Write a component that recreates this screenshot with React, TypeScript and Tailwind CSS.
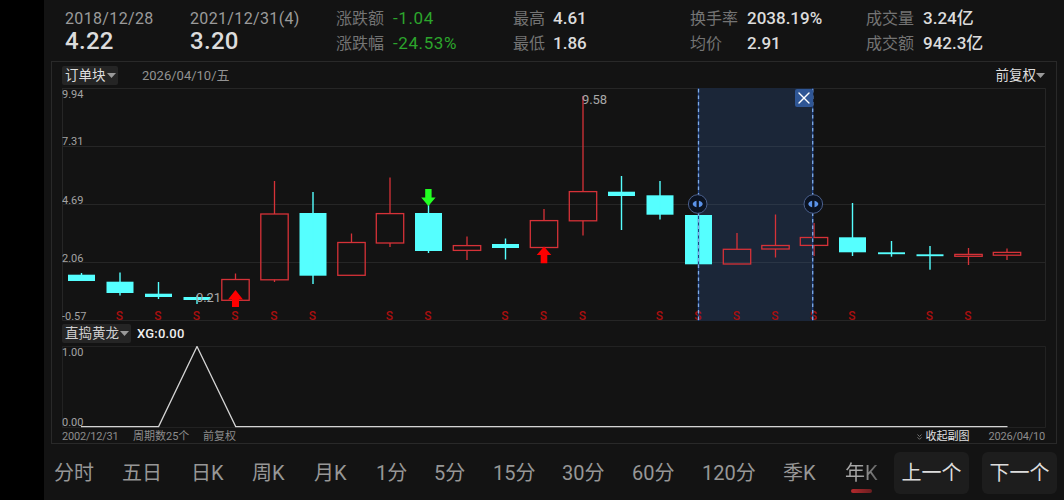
import { useState } from "react";
import { X } from "lucide-react";

type Candle = {
  up: boolean;
  top: number;
  bottom: number;
  high: number;
  low: number;
  signal?: boolean;
};

const FIRST_X = 81.5;
const STEP = 38.56;
const candleX = (i: number) => Math.round((FIRST_X + i * STEP) * 2) / 2;

const candles: Candle[] = [
  { up: false, top: 274.7, bottom: 281, high: 273, low: 281 },
  { up: false, top: 281.7, bottom: 293, high: 272.5, low: 295.5, signal: true },
  { up: false, top: 293.7, bottom: 297, high: 282, low: 299, signal: true },
  { up: false, top: 297, bottom: 300, high: 295.5, low: 304, signal: true },
  { up: true, top: 279.5, bottom: 300.3, high: 273.5, low: 300, signal: true },
  { up: true, top: 214, bottom: 279.8, high: 181, low: 282, signal: true },
  { up: false, top: 213, bottom: 275.7, high: 192, low: 284, signal: true },
  { up: true, top: 242.5, bottom: 275.3, high: 233.5, low: 275 },
  { up: true, top: 213.6, bottom: 243, high: 177.5, low: 247, signal: true },
  { up: false, top: 213, bottom: 251, high: 204, low: 253, signal: true },
  { up: true, top: 245.6, bottom: 250.4, high: 236.5, low: 260 },
  { up: false, top: 244, bottom: 248, high: 238.5, low: 259.5, signal: true },
  { up: true, top: 220.6, bottom: 247.5, high: 209, low: 247, signal: true },
  { up: true, top: 191.6, bottom: 220.8, high: 96, low: 235.5, signal: true },
  { up: false, top: 191.7, bottom: 196, high: 176, low: 230 },
  { up: false, top: 195.3, bottom: 214.7, high: 181, low: 219.5, signal: true },
  { up: false, top: 215, bottom: 264.3, high: 215, low: 264, signal: true },
  { up: true, top: 249.3, bottom: 264, high: 233, low: 264, signal: true },
  { up: true, top: 245.5, bottom: 249, high: 214.5, low: 257.5, signal: true },
  { up: true, top: 237.5, bottom: 245.4, high: 223, low: 256, signal: true },
  { up: false, top: 237.3, bottom: 252.3, high: 203, low: 256, signal: true },
  { up: false, top: 252.3, bottom: 254.2, high: 241, low: 256.7 },
  { up: false, top: 254.3, bottom: 256.2, high: 246, low: 269.7, signal: true },
  { up: true, top: 254.4, bottom: 256.3, high: 248, low: 265, signal: true },
  { up: true, top: 252.4, bottom: 255.2, high: 248.5, low: 260 },
];

const axis = [
  { label: "9.94", y: 98 },
  { label: "7.31", y: 145.3 },
  { label: "4.69", y: 203.5 },
  { label: "2.06", y: 261.7 },
  { label: "-0.57", y: 319.8 },
];

const stats = [
  {
    width: "w-[177px]",
    rows: [
      { label: "涨跌额", value: "-1.04" },
      { label: "涨跌幅", value: "-24.53%" },
    ],
    down: true,
  },
  {
    width: "w-[177px]",
    rows: [
      { label: "最高", value: "4.61" },
      { label: "最低", value: "1.86" },
    ],
  },
  {
    width: "w-[176px]",
    rows: [
      { label: "换手率", value: "2038.19%" },
      { label: "均价", value: "2.91" },
    ],
    wide: true,
  },
  {
    width: "w-[150px]",
    rows: [
      { label: "成交量", value: "3.24亿" },
      { label: "成交额", value: "942.3亿" },
    ],
    wide: true,
  },
];

const periods = [
  { name: "分时", width: "w-[68px]" },
  { name: "五日", width: "w-[69px]" },
  { name: "日K", width: "w-[61px]" },
  { name: "周K", width: "w-[62px]" },
  { name: "月K", width: "w-[62px]" },
  { name: "1分", width: "w-[58px]" },
  { name: "5分", width: "w-[59px]" },
  { name: "15分", width: "w-[69px]" },
  { name: "30分", width: "w-[70px]" },
  { name: "60分", width: "w-[70px]" },
  { name: "120分", width: "w-[81px]" },
  { name: "季K", width: "w-[62px]" },
  { name: "年K", width: "w-[49px]" },
];

const Caret = () => (
  <svg className="h-[5px] w-[9px] shrink-0" viewBox="0 0 9 5">
    <path d="M0 0H9L4.5 5Z" fill="#9a9a9a" />
  </svg>
);

const Handle = ({ x }: { x: number }) => (
  <g>
    <circle cx={x} cy={204} r={9.3} fill="#0b1322" stroke="#4a5f8c" />
    <path
      d={`M${x - 1.2} 200.8V207.2C${x - 3.2} 207 ${x - 5} 205.2 ${x - 5} 204S${x - 3.2} 201 ${x - 1.2} 200.8Z`}
      fill="#5b93ea"
    />
    <path
      d={`M${x + 1.2} 200.8V207.2C${x + 3.2} 207 ${x + 5} 205.2 ${x + 5} 204S${x + 3.2} 201 ${x + 1.2} 200.8Z`}
      fill="#5b93ea"
    />
  </g>
);

const Header = () => (
  <header className="flex h-[61px] pl-[21px] pt-[6px] text-[17px] leading-[25px]">
    <div className="w-[125px]">
      <p className="text-base leading-[25px] tracking-[0.35px] text-[#9b9b9b]">
        2018/12/28
      </p>
      <p className="-mt-0.5 text-2xl leading-[25px] font-medium tracking-[0.3px] text-[#dcdcdc]">
        4.22
      </p>
    </div>
    <div className="w-[146px]">
      <p className="text-base leading-[25px] tracking-[0.35px] text-[#9b9b9b]">
        2021/12/31(4)
      </p>
      <p className="-mt-0.5 text-2xl leading-[25px] font-medium tracking-[0.3px] text-[#dcdcdc]">
        3.20
      </p>
    </div>
    {stats.map((group, i) => (
      <div key={i} className={group.width}>
        {group.rows.map((row) => (
          <p key={row.label} className="flex whitespace-nowrap">
            <span
              className={`text-base leading-[25px] text-[#747474] ${
                group.wide || group.down ? "w-[57px]" : "w-10"
              }`}
            >
              {row.label}
            </span>
            <span
              className={
                group.down
                  ? "tracking-[0.6px] text-[#2ca52c]"
                  : "font-medium text-[#dcdcdc]"
              }
            >
              {row.value}
            </span>
          </p>
        ))}
      </div>
    ))}
  </header>
);

const MainChart = ({
  selecting,
  onClose,
}: {
  selecting: boolean;
  onClose: () => void;
}) => (
  <div className="relative h-[234px]">
    <svg className="block h-[234px] w-[984px]" viewBox="62 88 984 234">
      <path
        d="M62 88.5H1045.5V320.5H62.5V88.5M62 146.5H1045M62 204.5H1045M62 262.5H1045"
        fill="none"
        stroke="#262626"
      />
      {selecting && (
        <rect x={698} y={88} width={115} height={233} fill="#1b2638" />
      )}
      {selecting && (
        <path
          d="M698 146.5H813M698 204.5H813M698 262.5H813"
          stroke="#2a3545"
        />
      )}
      <g fontSize={11} fill="#a3a3a3">
        {axis.map((tick) => (
          <text key={tick.label} x={62} y={tick.y}>
            {tick.label}
          </text>
        ))}
      </g>
      {candles.map((c, i) => {
        const x = candleX(i);
        return c.up ? (
          <g key={i} stroke="#d63238" strokeWidth={1.3} fill="none">
            <rect x={x - 13.7} y={c.top} width={27.4} height={c.bottom - c.top} />
            <path d={`M${x} ${c.high}V${c.top}M${x} ${c.bottom}V${c.low}`} />
          </g>
        ) : (
          <g key={i} fill="#55ffff">
            <rect x={x - 13.5} y={c.top} width={27} height={c.bottom - c.top} />
            <rect x={x - 0.7} y={c.high} width={1.4} height={c.low - c.high} />
          </g>
        );
      })}
      <g fontSize={12} fontWeight={500} fill="#a80f0f" textAnchor="middle">
        {candles.map(
          (c, i) =>
            c.signal && (
              <text key={i} x={candleX(i) - 0.7} y={319.7}>
                S
              </text>
            )
        )}
      </g>
      <g fontSize={13} fill="#a8a8a8">
        <text x={196} y={302} textLength={25}>
          0.21
        </text>
        <text x={582} y={104} textLength={25}>
          9.58
        </text>
      </g>
      <path d="M235.5 290L243 299.5H239V307H232V299.5H228Z" fill="#ff0000" />
      <path d="M544 246.5L551.3 255H547.3V263.3H540.7V255H536.7Z" fill="#ff0000" />
      <path d="M425.2 189H431.6V197.5H435.6L428.4 206L421.2 197.5H425.2Z" fill="#22ff22" />
      {selecting && (
        <g>
          <path
            d="M698.5 88V321M812.7 88V321"
            stroke="#1f4080"
            strokeWidth={1.3}
          />
          <path
            d="M698.5 89V321M812.7 89V321"
            stroke="#7fabe8"
            strokeWidth={1.3}
            strokeDasharray="3.6 2.9"
          />
          <Handle x={697.7} />
          <Handle x={813.3} />
        </g>
      )}
    </svg>
    {selecting && (
      <button
        className="absolute top-px left-[733px] flex h-[18px] w-[18px] items-center justify-center rounded-[2px] bg-[#2f5695] text-white"
        onClick={onClose}
      >
        <X size={20} strokeWidth={1.6} className="shrink-0" />
      </button>
    )}
  </div>
);

const SubChart = () => (
  <svg className="block h-[82px] w-[984px]" viewBox="62 346 984 82">
    <path d="M62.5 346.5H1045.5V427.5H62.5Z" fill="none" stroke="#222222" />
    <g fontSize={11} fill="#a3a3a3">
      <text x={62} y={356}>
        1.00
      </text>
      <text x={62} y={426}>
        0.00
      </text>
    </g>
    <path
      d="M81 426.6H158.6L197 346.5L235.7 426.6H1007.5"
      fill="none"
      stroke="#d4d4d4"
      strokeWidth={1.3}
    />
  </svg>
);

const App = () => {
  const [period, setPeriod] = useState<string>("年K");
  const [selecting, setSelecting] = useState<boolean>(true);

  return (
    <div className="h-[500px] w-[1064px] overflow-hidden bg-black pl-11 font-['Roboto','Noto_Sans_CJK_SC',sans-serif]">
      <div className="h-full bg-[#131313]">
        <Header />
        <section className="ml-[7px] h-[383px] w-[1006px] border border-[#292929] pl-2.5">
          <div className="flex h-[26px] w-[983px] items-center text-[13.5px]">
            <button className="flex h-[19px] w-14 items-center gap-px rounded-[2px] bg-[#252525] pl-[3px] whitespace-nowrap text-[#dedede]">
              订单块
              <Caret />
            </button>
            <span className="ml-6 pt-0.5 text-[13px] text-[#929292]">
              2026/04/10/五
            </span>
            <button className="ml-auto flex items-center text-[#dedede]">
              前复权
              <Caret />
            </button>
          </div>
          <MainChart
            selecting={selecting}
            onClose={() => setSelecting(false)}
          />
          <div className="flex h-6 items-center pb-px text-[13.5px]">
            <button className="flex h-[19px] w-[69px] items-center gap-px rounded-[2px] bg-[#252525] pl-[3px] whitespace-nowrap text-[#cfcfcf]">
              直捣黄龙
              <Caret />
            </button>
            <span className="ml-1.5 text-[13px] font-medium tracking-[0.2px] text-[#eeeeee]">
              XG:0.00
            </span>
          </div>
          <SubChart />
          <div className="flex h-[15px] w-[983px] items-center pt-[3px] text-[11px] whitespace-nowrap text-[#8c8c8c]">
            <span className="w-[71px] tracking-[-0.2px]">2002/12/31</span>
            <span className="w-[70px]">周期数25个</span>
            <span>前复权</span>
            <button className="ml-auto flex items-center gap-[3px] text-[#e0e0e0]">
              <svg className="h-1.5 w-[5px]" viewBox="0 0 5 6">
                <path
                  d="M0.5 0.5L2.5 2.5L4.5 0.5M0.5 3.3L2.5 5.3L4.5 3.3"
                  fill="none"
                  stroke="#8a8a8a"
                  strokeWidth={0.8}
                />
              </svg>
              收起副图
            </button>
            <span className="ml-[19px] tracking-[-0.2px]">2026/04/10</span>
          </div>
        </section>
        <nav className="flex h-14 items-center pt-px pl-2.5 text-xl whitespace-nowrap text-[#979797]">
          {periods.map((p) => (
            <button
              key={p.name}
              className={`relative h-10 shrink-0 text-left ${p.width} ${
                p.name === period && p.name === "年K"
                  ? "bg-linear-to-r from-[#a8a8a8] from-30% to-[#484848] to-80% bg-clip-text text-transparent"
                  : ""
              }`}
              onClick={() => setPeriod(p.name)}
            >
              {p.name}
              {p.name === period && (
                <span className="absolute top-9 left-1.5 h-1 w-[21px] rounded-[2px] bg-linear-to-r from-[#b5282c] to-[#6a1e20]" />
              )}
            </button>
          ))}
          <button className="h-[42px] w-[75px] shrink-0 rounded-md bg-[#1d1d1d] text-[#dcdcdc]">
            上一个
          </button>
          <button className="ml-[13px] h-[42px] w-[75px] shrink-0 rounded-md bg-[#1d1d1d] text-[#dcdcdc]">
            下一个
          </button>
        </nav>
      </div>
    </div>
  );
};

export default App;
